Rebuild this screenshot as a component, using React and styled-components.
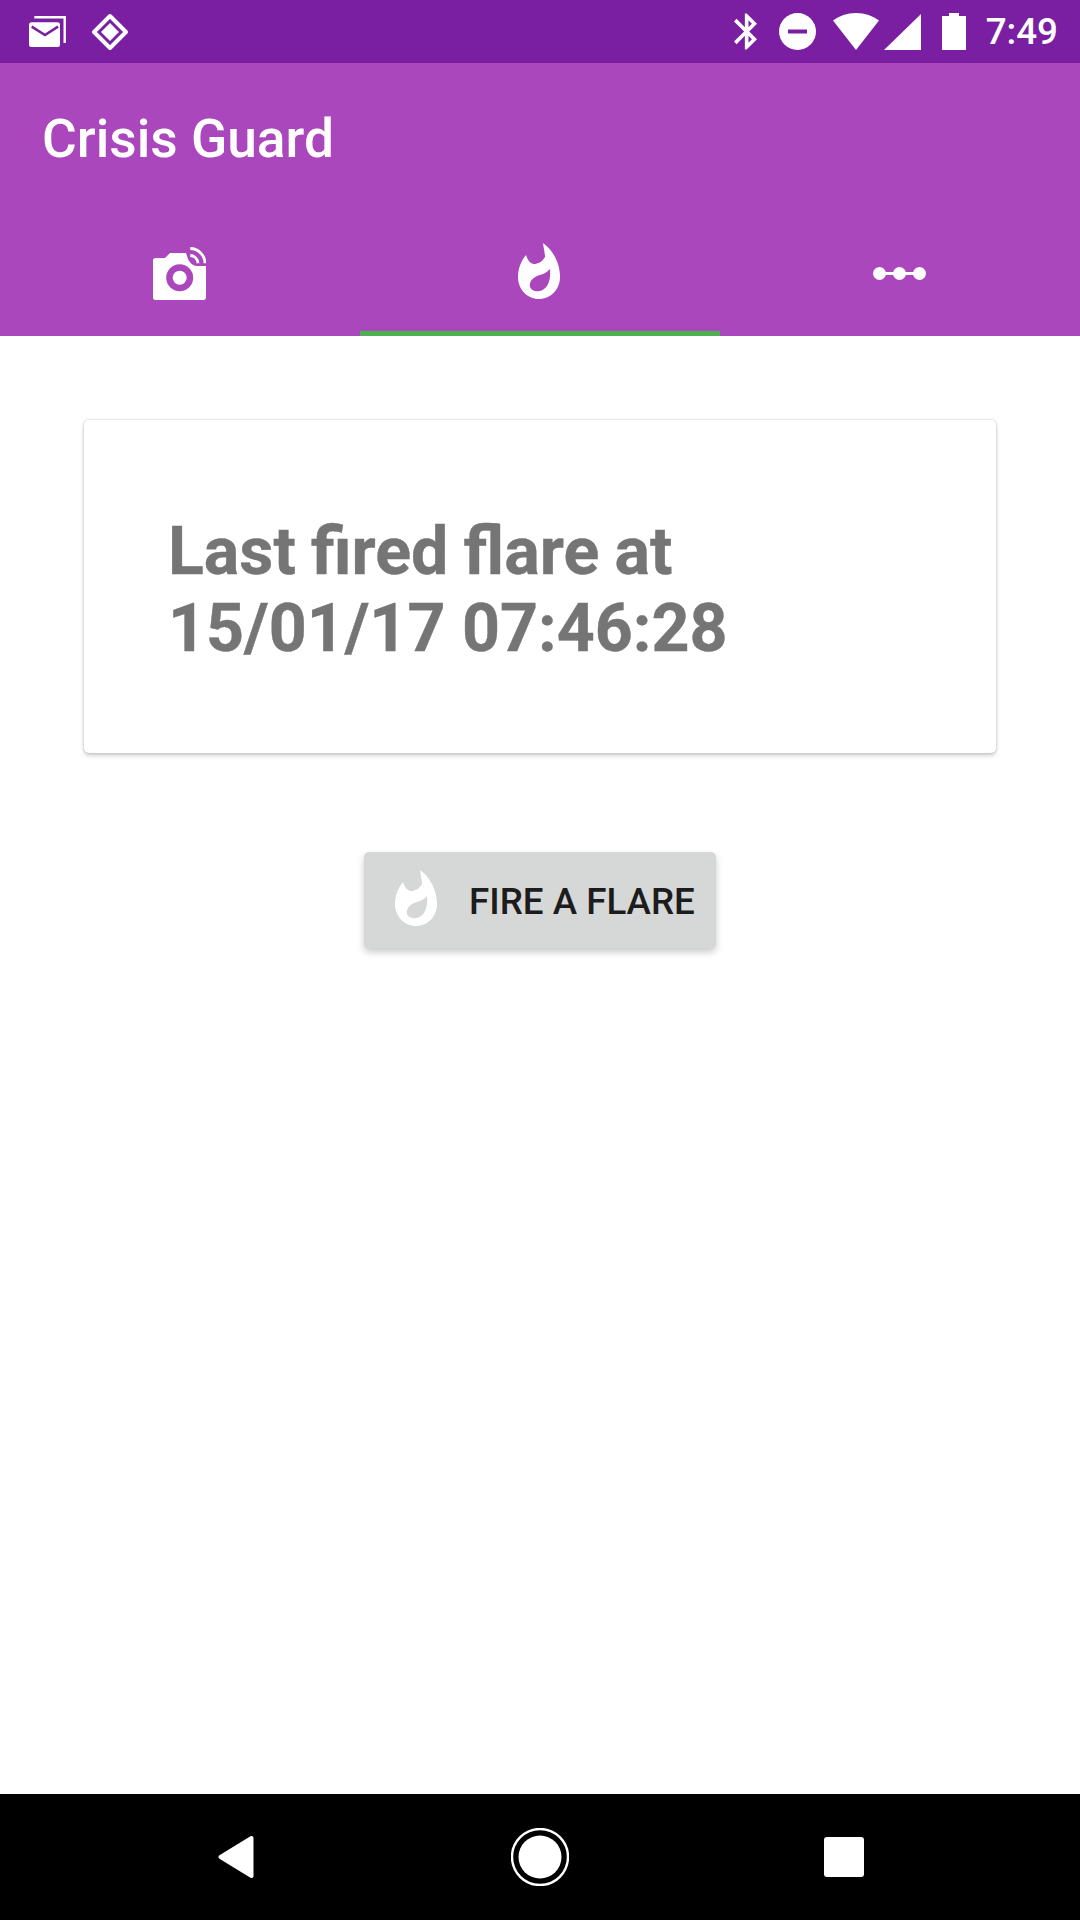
import React from 'react';
import styled, { createGlobalStyle } from 'styled-components';

const GlobalStyle = createGlobalStyle`
    html, body {
        margin: 0;
        padding: 0;
        background: #fff;
        font-family: Roboto, "Liberation Sans", sans-serif;
    }
`;

const FLAME = 'M25 0C25.5 5 27 10 27 14C24 19 20 21 16 21C12.5 21 9.5 17 8 12C3 18 0 26 0 34C0 46 9 56 21 56C33 56 42 46 42 34C42 20 35 7 25 0ZM32 26C32.5 33 32 38 29 43C26 47.5 21 49 17 48C13 47 11 44 12 40.5C13 36 17 33.5 22 32C26 31 29.5 29 32 26Z';

// viewBox is 4 taller than the flame, it sits a bit above centre in the reference
function FlameIcon({ color, width, height }) {
    return (
        <svg viewBox="0 0 42 60" width={width} height={height}>
            <path d={FLAME} fill={color} fillRule="evenodd" />
        </svg>
    );
}

function App() {
    return (
        <Page>
            <GlobalStyle />
            <StatusBar>
                <StatusGroup>
                    <StatusIcon $ml={29} viewBox="0 0 37 31" width="37" height="31">
                        <path d="M5.3 1.3H35.7V27" fill="none" stroke="#fff" strokeWidth="2.4" />
                        <rect y="6.3" width="31" height="24.7" rx="2.5" fill="#fff" />
                        <path d="M2.7 10.7L16 19L29 10.7" fill="none" stroke="#7b1fa2" strokeWidth="2.6" />
                    </StatusIcon>
                    <StatusIcon $ml={25} viewBox="0 0 38 38" width="38" height="38">
                        <path d="M19 3L35 19L19 35L3 19Z" fill="none" stroke="#fff" strokeWidth="4" strokeLinejoin="round" />
                        <path d="M19 10L28 19L19 28L10 19Z" fill="#fff" />
                    </StatusIcon>
                </StatusGroup>
                <StatusGroup>
                    <StatusIcon viewBox="5 2 12.71 20" width="23" height="37">
                        <path fill="#fff" d="M17.71 7.71L12 2h-1v7.59L6.41 5 5 6.41 10.59 12 5 17.59 6.41 19 11 14.41V22h1l5.71-5.71-4.3-4.29 4.3-4.29zM13 5.83l1.88 1.88L13 9.59V5.83zm1.88 10.46L13 18.17v-3.76l1.88 1.88z" />
                    </StatusIcon>
                    <StatusIcon $ml={22} viewBox="0 0 37 37" width="37" height="37">
                        <circle cx="18.5" cy="18.5" r="18.5" fill="#fff" />
                        <rect x="9" y="16.5" width="19" height="4" fill="#7b1fa2" />
                    </StatusIcon>
                    <StatusIcon $ml={17} viewBox="0 0 46 37" width="46" height="37">
                        <path d="M0 7.5C6 3 14 0 23 0C32 0 40 3 46 7.5L23 37Z" fill="#fff" />
                    </StatusIcon>
                    <StatusIcon $ml={5} viewBox="0 0 37 36" width="37" height="36">
                        <path d="M37 0V36H0Z" fill="#fff" />
                    </StatusIcon>
                    <StatusIcon $ml={21} viewBox="0 0 24 37" width="24" height="37">
                        <path d="M7 0H17V3H24V37H0V3H7Z" fill="#fff" />
                    </StatusIcon>
                    <Clock>7:49</Clock>
                </StatusGroup>
            </StatusBar>

            <AppBar>
                <Toolbar>Crisis Guard</Toolbar>
                <Tabs>
                    <Tab>
                        <svg viewBox="0 0 53 53" width="53" height="53">
                            <path d="M2.5 11H12L17 6H33L35 12C37 16 40 19 44 19H53V50.5C53 52 52 53 50.5 53H2.5C1 53 0 52 0 50.5V13.5C0 12 1 11 2.5 11Z" fill="#fff" />
                            <circle cx="26.7" cy="30.7" r="13.5" fill="#ab47bc" />
                            <circle cx="26.7" cy="30.7" r="7" fill="#fff" />
                            <path d="M37.3 1.5A15 15 0 0 1 52 16.3M37.3 8.5A8 8 0 0 1 45 16.3" fill="none" stroke="#fff" strokeWidth="2.8" />
                        </svg>
                    </Tab>
                    <Tab $active>
                        <FlameIcon color="#fff" width={42} height={60} />
                    </Tab>
                    <Tab>
                        <svg viewBox="0 0 53 13" width="53" height="13">
                            <rect x="6" y="5" width="41" height="3" fill="#fff" />
                            <circle cx="6.5" cy="6.5" r="6.5" fill="#fff" />
                            <circle cx="26.5" cy="6.5" r="6.5" fill="#fff" />
                            <circle cx="46.5" cy="6.5" r="6.5" fill="#fff" />
                        </svg>
                    </Tab>
                </Tabs>
            </AppBar>

            <Content>
                <Card>
                    <CardText>
                        <FirstLine>Last fired flare at</FirstLine>
                        <br />
                        15/01/17 07:46:28
                    </CardText>
                </Card>
                <FireButton>
                    <FlameIcon color="#fff" width={42} height={60} />
                    <FireLabel>FIRE A FLARE</FireLabel>
                </FireButton>
            </Content>

            <NavBar>
                <NavSlot>
                    <svg viewBox="0 0 36 42" width="36" height="42">
                        <path d="M33.5 2L2.5 21L33.5 40Z" fill="#fff" stroke="#fff" strokeWidth="4" strokeLinejoin="round" />
                    </svg>
                </NavSlot>
                <NavSlot>
                    <svg viewBox="0 0 58 58" width="58" height="58">
                        <circle cx="29" cy="29" r="28" fill="none" stroke="#fff" strokeWidth="2.4" />
                        <circle cx="29" cy="29" r="21.5" fill="#fff" />
                    </svg>
                </NavSlot>
                <NavSlot>
                    <NavSquare />
                </NavSlot>
            </NavBar>
        </Page>
    );
}

const Page = styled.div`
    display: flex;
    flex-direction: column;
    width: 1080px;
    height: 1920px;
    overflow: hidden;
    background: #fff;
`;

const StatusBar = styled.div`
    display: flex;
    justify-content: space-between;
    align-items: center;
    flex: none;
    height: 63px;
    padding-right: 22px;
    background: #7b1fa2;
`;

const StatusGroup = styled.div`
    display: flex;
    align-items: center;
`;

const StatusIcon = styled.svg`
    display: block;
    margin-left: ${(p) => p.$ml || 0}px;
`;

const Clock = styled.span`
    margin-left: 20px;
    color: #fff;
    font-size: 36.75px;
    font-weight: 500;
    line-height: 63px;
`;

const AppBar = styled.div`
    flex: none;
    background: #ab47bc;
`;

const Toolbar = styled.div`
    display: flex;
    align-items: center;
    height: 147px;
    padding: 4px 0 0 42px;
    box-sizing: border-box;
    color: #fff;
    font-size: 53.3px;
    font-weight: 500;
`;

const Tabs = styled.div`
    display: flex;
    height: 126px;
`;

const Tab = styled.div`
    display: flex;
    justify-content: center;
    align-items: center;
    flex: 1;
    box-shadow: inset 0 -5px 0 ${(p) => (p.$active ? '#4caf50' : 'transparent')};

    svg {
        margin-right: 2px;
    }
`;

const Content = styled.div`
    display: flex;
    flex-direction: column;
    align-items: center;
    flex: 1;
    padding-top: 84px;
`;

const Card = styled.div`
    box-sizing: border-box;
    width: 912px;
    height: 333px;
    padding: 93px 84px 0;
    background: #fff;
    border-radius: 5px;
    box-shadow: 0 0 3px rgba(0, 0, 0, 0.2), 0 3px 4px rgba(0, 0, 0, 0.16);
`;

const CardText = styled.div`
    color: #757575;
    font-size: 66.3px;
    font-weight: 700;
    line-height: 77px;
    text-rendering: optimizeLegibility;
    font-variant-ligatures: common-ligatures;
    -webkit-text-stroke: 0.4px #757575;
`;

const FirstLine = styled.span`
    word-spacing: -1.2px;
`;

const FireButton = styled.div`
    display: flex;
    align-items: center;
    gap: 32px;
    box-sizing: border-box;
    width: 352px;
    height: 96px;
    margin-top: 99px;
    padding-left: 31px;
    background: #d6d7d7;
    border-radius: 5px;
    box-shadow: 0 4px 7px rgba(0, 0, 0, 0.22);
`;

const FireLabel = styled.span`
    padding-top: 2px;
    color: #1c1c1c;
    font-size: 36.75px;
    font-weight: 500;
    white-space: nowrap;
`;

const NavBar = styled.div`
    display: flex;
    justify-content: center;
    align-items: center;
    flex: none;
    height: 126px;
    background: #000;
`;

const NavSlot = styled.div`
    display: flex;
    justify-content: center;
    align-items: center;
    width: 304px;
`;

const NavSquare = styled.div`
    width: 40px;
    height: 40px;
    background: #fff;
    border-radius: 3px;
`;

export default App;
